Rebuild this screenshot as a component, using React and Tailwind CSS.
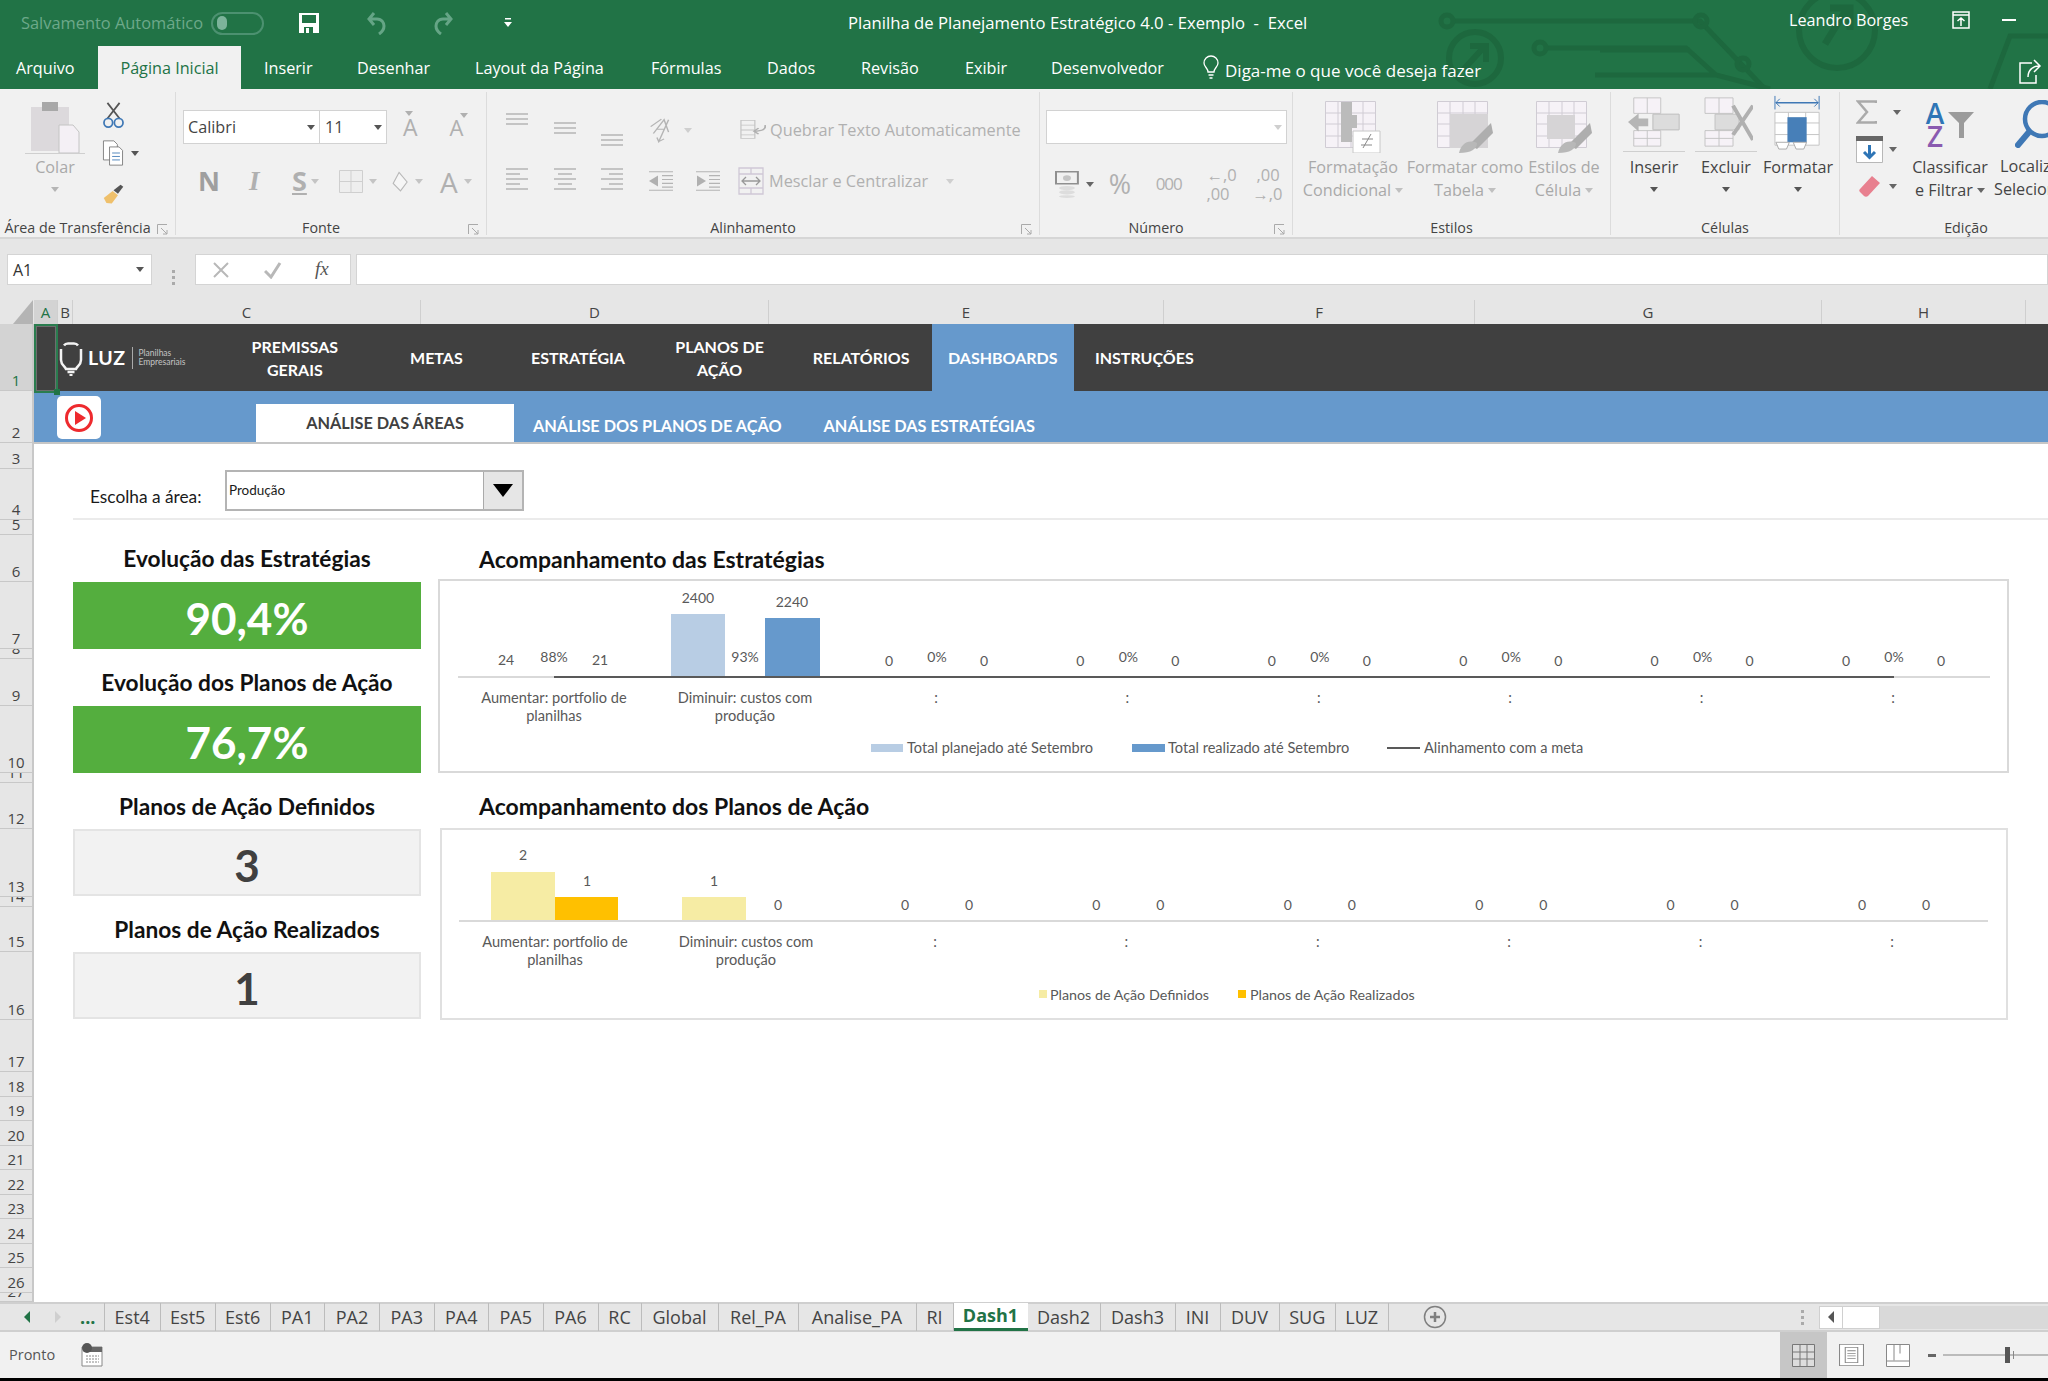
import React from 'react';

const G = '#b4b4b4';

function Caret({ c = '#8a8a8a', className = '' }) {
  return (
    <svg width="8" height="5" viewBox="0 0 8 5" className={className}>
      <path d="M0 0h8L4 5z" fill={c} />
    </svg>
  );
}

function Circuit() {
  return (
    <svg className="absolute top-0 left-0 pointer-events-none" width="2048" height="89" viewBox="0 0 2048 89" fill="none" stroke="#1d683e" strokeWidth="5">
      <path d="M1452 21H1700L1765 89" />
      <circle cx="1447" cy="21" r="6" />
      <circle cx="1701" cy="21" r="6" />
      <path d="M1544 48H1686L1716 75L1770 89M1690 50L1600 50M1595 75H1717" />
      <circle cx="1540" cy="48" r="6" />
      <circle cx="1743" cy="64" r="6" />
      <circle cx="1475" cy="58" r="26" strokeWidth="6" />
      <path d="M1463 70L1485 46M1470 46H1486V62" strokeWidth="6" />
      <circle cx="1837" cy="30" r="38" strokeWidth="6" />
      <path d="M1825 44L1846 10M1830 8H1850V30" strokeWidth="7" />
      <path d="M1990 89L2010 36H2048" />
    </svg>
  );
}

function TitleBar() {
  return (
    <div className="relative bg-[#217346] h-[89px] overflow-hidden font-['Open_Sans',sans-serif] shrink-0">
      <Circuit />
      <div className="relative h-[46px] flex items-center text-white">
        <span className="ml-[21px] w-[186px] text-[16.4px] text-[#6da98a] whitespace-nowrap">Salvamento Automático</span>
        <div className="ml-[4px] w-[53px] h-[23px] rounded-full border-2 border-[#4c9170] flex items-center pl-[4px]">
          <div className="w-[10px] h-[14px] rounded-full bg-[#7cb39a]" />
        </div>
        <svg className="ml-[35px]" width="20" height="20" viewBox="0 0 20 20">
          <path d="M0 0h20v20H0z" fill="#fff" />
          <path d="M3 2h14v8H3z" fill="#217346" />
          <path d="M5 14h9v6H5z" fill="#217346" />
          <path d="M7 15h3v5H7z" fill="#fff" />
        </svg>
        <svg className="ml-[47px]" width="22" height="24" viewBox="0 0 22 24" fill="none" stroke="#65a586" strokeWidth="3">
          <path d="M8 2L3 8l5 6M3 8h8c5 0 7 4 7 7 0 3-2 6-5 8" />
        </svg>
        <svg className="ml-[44px]" width="22" height="24" viewBox="0 0 22 24" fill="none" stroke="#65a586" strokeWidth="3">
          <path d="M14 2l5 6-5 6M19 8h-8c-5 0-7 4-7 7 0 3 2 6 5 8" />
        </svg>
        <svg className="ml-[50px]" width="8" height="10" viewBox="0 0 8 10" fill="#fff">
          <path d="M1 0h6v1.5H1zM0 4h8L4 9z" />
        </svg>
        <span className="ml-[336px] w-[480px] text-[16.7px] whitespace-pre">Planilha de Planejamento Estratégico 4.0 - Exemplo  -  Excel</span>
        <span className="ml-[461px] w-[140px] text-[16.2px] -mt-[6px] whitespace-nowrap">Leandro Borges</span>
        <svg className="ml-[22px] -mt-[6px]" width="20" height="18" viewBox="0 0 20 18" fill="none" stroke="#fff" strokeWidth="1.5">
          <path d="M2 1h16v16H2zM2 4h16M10 15V7M6.5 10L10 7l3.5 3" />
        </svg>
        <div className="ml-[31px] w-[14px] h-[2px] bg-white -mt-[6px]" />
      </div>
      <div className="relative h-[43px] flex text-white text-[16.2px] whitespace-nowrap">
        <span className="ml-[16px] w-[82px] pt-[10px]">Arquivo</span>
        <span className="w-[143px] bg-[#f1f1f1] text-[#217346] text-center pt-[10px]">Página Inicial</span>
        <span className="ml-[23px] w-[93px] pt-[10px]">Inserir</span>
        <span className="w-[118px] pt-[10px]">Desenhar</span>
        <span className="w-[176px] pt-[10px]">Layout da Página</span>
        <span className="w-[116px] pt-[10px]">Fórmulas</span>
        <span className="w-[94px] pt-[10px]">Dados</span>
        <span className="w-[104px] pt-[10px]">Revisão</span>
        <span className="w-[86px] pt-[10px]">Exibir</span>
        <span className="w-[152px] pt-[10px]">Desenvolvedor</span>
        <svg className="mt-[9px] mr-[6px]" width="16" height="24" viewBox="0 0 16 24" fill="none" stroke="#fff" strokeWidth="1.3">
          <path d="M5 17c0-4-4-5-4-9a7 7 0 0114 0c0 4-4 5-4 9zM5.5 20h5M6.5 23h3" />
        </svg>
        <span className="w-[300px] pt-[12px] text-[17px]">Diga-me o que você deseja fazer</span>
        <svg className="absolute left-[2018px] top-[11px]" width="26" height="28" viewBox="0 0 26 28" fill="none" stroke="#fff" strokeWidth="1.5">
          <path d="M14 6H2v20h16v-8M10 20c0-7 5-11 11-11M16 3l6 6-6 6" />
        </svg>
      </div>
    </div>
  );
}

function Group({ w, label, launcher, children }) {
  return (
    <div className={`${w} h-full shrink-0 flex flex-col relative`}>
      <div className="flex-1 min-h-0">{children}</div>
      <div className={`h-[18px] text-center text-[14.3px] text-[#444] leading-[18px] whitespace-nowrap ${launcher ? 'pr-[20px]' : ''}`}>{label}</div>
      {launcher && (
        <svg className="absolute right-[7px] bottom-[2px]" width="11" height="11" viewBox="0 0 11 11" fill="none" stroke="#aaa">
          <path d="M.5 10V.5H10M4 4l6 6M6 10h4V6" />
        </svg>
      )}
    </div>
  );
}

const Sep = () => <div className="w-px h-[143px] mt-[3px] bg-[#dcdcdc] shrink-0" />;

function Lines({ rows, w = 24, h = 38, stroke = G }) {
  return (
    <svg width={w} height={h} viewBox={`0 0 ${w} ${h}`} stroke={stroke} strokeWidth="1.5">
      {rows.map(([x1, x2, y], i) => <path key={i} d={`M${x1} ${y}H${x2}`} />)}
    </svg>
  );
}

const stack = (y, l = [[1, 23], [1, 23], [1, 23], [1, 23]]) => l.map((p, i) => [p[0], p[1], y + i * 5]);

function GridIcon({ w, h, children }) {
  return (
    <svg width={w} height={h} viewBox={`0 0 ${w} ${h}`}>
      {children}
    </svg>
  );
}

function Clipboard() {
  return (
    <Group w="w-[175px]" label="Área de Transferência" launcher>
      <div className="flex">
        <div className="ml-[22px] w-[66px] flex flex-col items-center pt-[10px]">
          <svg width="52" height="54" viewBox="0 0 52 54">
            <path d="M2 8h38v44H2z" fill="#dcd9dc" />
            <path d="M13 3h16v9H13z" fill="#a8a8a8" />
            <path d="M30 26h14l6 7v21H30z" fill="#f4f0f5" stroke="#c4c4c4" />
          </svg>
          <div className="h-px w-[60px] bg-[#cfcfcf]" />
          <span className="text-[16.2px] text-[#a9a9a9] mt-[1px]">Colar</span>
          <Caret c="#b5b5b5" className="mt-[8px]" />
        </div>
        <div className="ml-[14px] flex flex-col pt-[13px]">
          <svg width="23" height="26" viewBox="0 0 26 30" fill="none">
            <path d="M6 1l14 18M20 1L6 19" stroke="#555" strokeWidth="2" />
            <circle cx="7" cy="24" r="5" stroke="#3f78b5" strokeWidth="2" />
            <circle cx="19" cy="24" r="5" stroke="#3f78b5" strokeWidth="2" />
          </svg>
          <div className="flex items-center mt-[12px]">
            <svg width="22" height="26" viewBox="0 0 24 30" fill="#fff" stroke="#777">
              <path d="M1 1h12l4 4v18H1z" />
              <path d="M8 8h11l4 4v17H8z" />
              <path d="M11 15h9M11 19h9M11 23h9" stroke="#3f78b5" />
            </svg>
            <Caret c="#555" className="ml-[7px]" />
          </div>
          <svg width="23" height="21" viewBox="0 0 26 30" className="mt-[18px]" preserveAspectRatio="none">
            <path d="M2 20L12 10l6 6-7 12-6-1z" fill="#efc06b" />
            <path d="M13 9l8-8 3 3-6 10z" fill="#555" />
          </svg>
        </div>
      </div>
    </Group>
  );
}

function Fonte() {
  return (
    <Group w="w-[310px]" label="Fonte" launcher>
      <div className="pl-[7px] pt-[21px]">
        <div className="flex items-center">
          <div className="w-[137px] h-[34px] bg-white border border-[#d2d2d2] flex items-center justify-between pl-[4px] pr-[4px] text-[16.2px] text-[#444]">
            Calibri <Caret c="#555" />
          </div>
          <div className="w-[67px] h-[34px] bg-white border border-l-0 border-[#d2d2d2] flex items-center justify-between pl-[5px] pr-[4px] text-[16.2px] text-[#444]">
            11 <Caret c="#555" />
          </div>
          <span className="ml-[16px] text-[23px] text-[#b0b0b0] relative">A<Caret c="#b0b0b0" className="absolute top-[1px] left-[2px]" /></span>
          <span className="ml-[32px] text-[22px] text-[#b0b0b0] relative">A<Caret c="#b0b0b0" className="absolute top-[2px] left-[10px]" /></span>
        </div>
        <div className="flex items-center mt-[18px] h-[38px] text-[#b0b0b0] font-bold">
          <span className="ml-[15px] w-[51px] text-[27px] text-[#9f9f9f]">N</span>
          <span className="w-[43px] text-[27px] italic font-['Liberation_Serif',serif]">I</span>
          <span className="w-[19px] text-[27px] underline">S</span>
          <Caret c="#c4c4c4" />
          <svg className="ml-[20px]" width="24" height="23" viewBox="0 0 24 23" fill="#eee" stroke="#cfcfcf"><path d="M.5.5h23v22H.5zM12 .5v22M.5 11.5h23" /></svg>
          <Caret c="#c4c4c4" className="ml-[6px]" />
          <svg className="ml-[13px]" width="21" height="22" viewBox="0 0 24 30" fill="#f6f6f6" stroke="#b8b8b8" strokeWidth="1.5"><path d="M10 2l11 13-9 12-10-10z" /></svg>
          <Caret c="#c4c4c4" className="ml-[4px]" />
          <span className="ml-[17px] text-[28px] font-normal">A</span>
          <Caret c="#c4c4c4" className="ml-[6px]" />
        </div>
      </div>
    </Group>
  );
}

function Alinhamento() {
  return (
    <Group w="w-[552px]" label="Alinhamento" launcher>
      <div className="pl-[18px] pt-[21px] text-[16.3px] text-[#b0b0b0] whitespace-nowrap">
        <div className="flex items-center h-[40px]">
          <div className="w-[48px]"><Lines rows={stack(3).slice(0, 3)} /></div>
          <div className="w-[47px]"><Lines rows={stack(12).slice(0, 3)} /></div>
          <div className="w-[48px]"><Lines rows={stack(24).slice(0, 3)} /></div>
          <svg width="34" height="26" viewBox="0 0 38 38" preserveAspectRatio="none" fill="none" stroke={G} strokeWidth="1.6">
            <path d="M3 14L15 3M6 24l12-20 5 18M9 18h10M23 4L12 36l-2-6M12 36l6-4" />
          </svg>
          <Caret c="#cfcfcf" className="ml-[2px]" />
          <svg width="26" height="24" viewBox="0 0 28 40" preserveAspectRatio="none" fill="none" stroke="#c4c4c4" strokeWidth="1.3" className="ml-[48px]">
            <path d="M1 4h15v30H1zM1 12h15M1 20h15M1 28h15" />
            <path d="M27 12c1 6-2 10-12 10M20 17l-5 5 5 5" stroke="#b0b0b0" strokeWidth="2" />
          </svg>
          <span className="ml-[4px]">Quebrar Texto Automaticamente</span>
        </div>
        <div className="flex items-center h-[40px] mt-[11px]">
          <div className="w-[48px]"><Lines rows={stack(7, [[1, 23], [1, 15], [1, 23], [1, 15], [1, 23]])} /></div>
          <div className="w-[47px]"><Lines rows={stack(7, [[1, 23], [5, 19], [1, 23], [5, 19], [1, 23]])} /></div>
          <div className="w-[48px]"><Lines rows={stack(7, [[1, 23], [9, 23], [1, 23], [9, 23], [1, 23]])} /></div>
          <div className="w-[47px]">
            <svg width="26" height="20" viewBox="0 0 26 26" preserveAspectRatio="none" fill="none" stroke={G} strokeWidth="1.5">
              <path d="M1 1h24M14 6h11M14 11h11M14 16h11M14 21h11M1 25h24" />
              <path d="M1 13l9-7v14z" fill="#b0b0b0" stroke="none" />
            </svg>
          </div>
          <div className="w-[34px]">
            <svg width="26" height="20" viewBox="0 0 26 26" preserveAspectRatio="none" fill="none" stroke={G} strokeWidth="1.5">
              <path d="M1 1h24M14 6h11M14 11h11M14 16h11M14 21h11M1 25h24" />
              <path d="M11 13l-9-7v14z" fill="#b0b0b0" stroke="none" />
            </svg>
          </div>
          <svg width="26" height="28" viewBox="0 0 26 28" fill="none" stroke="#cfc8d6" strokeWidth="1.3" className="ml-[9px]">
            <path d="M1 1h24v26H1zM1 7h24M1 21h24M13 1v6M13 21v6" />
            <path d="M4 14h18M8 10l-4 4 4 4M18 10l4 4-4 4" stroke="#999" />
          </svg>
          <span className="ml-[5px]">Mesclar e Centralizar</span>
          <Caret c="#cfcfcf" className="ml-[18px]" />
        </div>
      </div>
    </Group>
  );
}

function Numero() {
  return (
    <Group w="w-[252px]" label="Número" launcher>
      <div className="pl-[6px] pt-[21px]">
        <div className="w-[241px] h-[34px] bg-white border border-[#d2d2d2] flex items-center justify-end pr-[4px]"><Caret c="#cfcfcf" /></div>
        <div className="flex items-center mt-[18px] h-[44px] text-[#b0b0b0]">
          <svg className="ml-[9px]" width="26" height="27" viewBox="0 0 26 38" preserveAspectRatio="none" fill="none">
            <path d="M1 1h22v17H1z" stroke="#8f8f8f" strokeWidth="2" />
            <circle cx="12" cy="10" r="4" fill="#c5c5c5" />
            <ellipse cx="12" cy="24" rx="8" ry="3" fill="#ddd" />
            <ellipse cx="12" cy="30" rx="8" ry="3" fill="#ddd" />
            <ellipse cx="12" cy="36" rx="8" ry="2" fill="#ddd" />
          </svg>
          <Caret c="#666" className="ml-[5px]" />
          <span className="ml-[15px] text-[27px] w-[42px]">%</span>
          <span className="ml-[5px] text-[17px] w-[51px] tracking-[-1px]">000</span>
          <div className="text-[16.5px] leading-[19px] w-[46px] whitespace-pre">{'←,0\n,00'}</div>
          <div className="text-[16.5px] leading-[19px] w-[40px] whitespace-pre">{' ,00\n→,0'}</div>
        </div>
      </div>
    </Group>
  );
}

function StyleBtn({ w, l1, l2, children }) {
  return (
    <div className={`${w} flex flex-col items-center pt-[12px] text-[16.2px] text-[#a9a9a9] whitespace-nowrap leading-[23px]`}>
      {children}
      <span className="mt-[3px]">{l1}</span>
      <span className="flex items-center gap-[4px]">{l2}<Caret c="#c0c0c0" /></span>
    </div>
  );
}

function TableLines() {
  return <path d="M.5.5h50v46H.5zM.5 12h50M.5 23h50M.5 35h50M13 .5v46M26 .5v46M38 .5v46" fill="none" stroke="#d0ccd4" />;
}

function Estilos() {
  return (
    <Group w="w-[317px]" label="Estilos">
      <div className="flex pl-[2px]">
        <StyleBtn w="w-[116px]" l1="Formatação" l2="Condicional">
          <GridIcon w={56} h={52}>
            <path d="M.5.5h50v46H.5z" fill="#f6f2f7" />
            <TableLines />
            <path d="M16 1h11v13h-11zM16 14h16v13H16zM16 27h11v14H16z" fill="#bbb" />
            <path d="M28 30h27v22H28z" fill="#fff" stroke="#c8c8c8" />
            <path d="M36 44h11M37 38h11M38 47l8-14" stroke="#888" fill="none" />
          </GridIcon>
        </StyleBtn>
        <StyleBtn w="w-[108px]" l1="Formatar como" l2="Tabela">
          <GridIcon w={56} h={52}>
            <path d="M.5.5h50v46H.5z" fill="#f6f2f7" />
            <TableLines />
            <path d="M13 13h38v34H13z" fill="#d6d4d6" />
            <path d="M54 22l2 10-16 16-8-4z" fill="#aeaeae" />
            <path d="M22 52c2-9 9-14 18-10 0 6-6 10-18 10z" fill="#b8b8b8" />
          </GridIcon>
        </StyleBtn>
        <StyleBtn w="w-[90px]" l1="Estilos de" l2="Célula">
          <GridIcon w={56} h={52}>
            <path d="M.5.5h50v46H.5z" fill="#f6f2f7" />
            <TableLines />
            <path d="M11 14h28v24H11z" fill="#d6d4d6" />
            <path d="M54 22l2 10-16 16-8-4z" fill="#aeaeae" />
            <path d="M22 52c2-9 9-14 18-10 0 6-6 10-18 10z" fill="#b8b8b8" />
          </GridIcon>
        </StyleBtn>
      </div>
    </Group>
  );
}

function CellBtn({ w, label, line, children }) {
  return (
    <div className={`${w} flex flex-col items-center pt-[8px] text-[16.2px] text-[#444]`}>
      <div className="h-[56px] flex items-start">{children}</div>
      {line ? <div className="h-px w-[62px] bg-[#cfcfcf] -mt-[2px]" /> : <div className="h-px -mt-[2px]" />}
      <span className="mt-[3px]">{label}</span>
      <Caret c="#555" className="mt-[8px]" />
    </div>
  );
}

function Celulas() {
  return (
    <Group w="w-[228px]" label="Células">
      <div className="flex">
        <CellBtn w="w-[72px] ml-[7px]" label="Inserir" line>
          <svg width="52" height="50" viewBox="0 0 54 58" preserveAspectRatio="none" fill="#f6f2f7" stroke="#c2c2c2">
            <path d="M6 1h28v18H6zM20 1v18M6 39h28v18H6zM20 39v18M6 48h28M26 20h27v18H26zM40 20v18" />
            <path d="M0 29l11-10v6h10v9H11v6z" fill="#b5b5b5" stroke="none" />
            <path d="M26 20h27v18H26z" fill="#dcdcdc" />
          </svg>
        </CellBtn>
        <CellBtn w="w-[72px]" label="Excluir" line>
          <svg width="54" height="50" viewBox="0 0 54 58" preserveAspectRatio="none" fill="#f6f2f7" stroke="#c2c2c2">
            <path d="M6 1h28v18H6zM20 1v18M6 39h28v18H6zM20 39v18M6 48h28" />
            <path d="M16 20h24v18H16z" fill="#dcdcdc" />
            <path d="M34 10l20 40M54 10L34 44" stroke="#b0b0b0" strokeWidth="4" />
          </svg>
        </CellBtn>
        <CellBtn w="w-[76px] ml-[-2px]" label="Formatar">
          <svg className="-mt-[3px]" width="48" height="56" viewBox="0 0 50 58" preserveAspectRatio="none" fill="none" stroke="#999">
            <path d="M2 9h44" stroke="#3f78b5" strokeWidth="1.5" />
            <path d="M1 2v14M47 2v14M6 5L2 9l4 4M42 5l4 4-4 4" stroke="#3f78b5" />
            <path d="M1 19h46v34H1zM15 19v34M33 19v34M1 30h46M1 42h46" stroke="#c4c4c4" fill="#fff" />
            <path d="M14 24h20v26H14z" fill="#477fb8" stroke="none" />
            <path d="M2 50h14l-3 7H5zM20 50h14l-3 7h-8z" fill="#fff" stroke="#aaa" />
          </svg>
        </CellBtn>
      </div>
    </Group>
  );
}

function Edicao() {
  return (
    <div className="h-full flex-1 relative overflow-hidden flex flex-col">
      <div className="flex-1 flex min-h-0">
        <div className="ml-[16px] w-[50px] pt-[11px] flex flex-col shrink-0">
          <div className="flex items-center gap-[16px] h-[24px]">
            <svg width="21" height="24" viewBox="0 0 21 24" fill="none" stroke="#aaa" strokeWidth="2.5"><path d="M20 3V1.5H2l9 10.5-9 10.5h18V21" /></svg>
            <Caret c="#666" />
          </div>
          <div className="flex items-center gap-[6px] mt-[12px]">
            <svg width="27" height="27" viewBox="0 0 27 27" fill="#fff" stroke="#b8b8b8">
              <path d="M.5.5h26v26H.5z" />
              <path d="M0 0h27v5H0z" fill="#666" stroke="none" />
              <path d="M13.5 9v12M8 16l5.5 5.5L19 16" stroke="#2e75b6" strokeWidth="3" fill="none" />
            </svg>
            <Caret c="#666" />
          </div>
          <div className="flex items-center gap-[9px] mt-[13px] ml-[3px]">
            <svg width="21" height="21" viewBox="0 0 21 21">
              <path d="M13 0l8 7L9 20c-1 1-3 1-4 0L1 16c-1-1-1-2 0-3z" fill="#e8808f" />
            </svg>
            <Caret c="#666" />
          </div>
        </div>
        <div className="w-[88px] pt-[13px] flex flex-col items-center text-[16.2px] text-[#444] whitespace-nowrap leading-[23px] shrink-0">
          <div className="flex h-[54px]">
            <div className="text-[28px] leading-[23px] font-semibold text-center">
              <div className="text-[#2e75b6]">A</div>
              <div className="text-[#8a5bb0]">Z</div>
            </div>
            <svg className="mt-[10px] ml-[4px]" width="26" height="26" viewBox="0 0 26 26" fill="#9b9b9b">
              <path d="M0 0h26L16 11v15h-5V11z" />
            </svg>
          </div>
          <span>Classificar</span>
          <span className="flex items-center gap-[4px]">e Filtrar <Caret c="#666" /></span>
        </div>
        <div className="pt-[11px] flex flex-col text-[16.2px] text-[#444] whitespace-nowrap leading-[23px]">
          <svg className="ml-[21px]" width="50" height="48" viewBox="0 0 50 48" fill="none" stroke="#3f78b5">
            <circle cx="27" cy="19" r="17" strokeWidth="4.5" />
            <path d="M14 32L3 45" strokeWidth="6" strokeLinecap="round" />
          </svg>
          <span className="mt-[7px] ml-[6px]">Localizar e</span>
          <span>Selecionar</span>
        </div>
      </div>
      <div className="h-[18px] w-[252px] text-center text-[14.3px] text-[#444] leading-[18px]">Edição</div>
    </div>
  );
}

function Ribbon() {
  return (
    <div className="h-[150px] bg-[#f1f1f1] border-b-2 border-[#d6d6d6] flex font-['Open_Sans',sans-serif] shrink-0">
      <Clipboard /><Sep />
      <Fonte /><Sep />
      <Alinhamento /><Sep />
      <Numero /><Sep />
      <Estilos /><Sep />
      <Celulas /><Sep />
      <Edicao />
    </div>
  );
}

function FormulaBar() {
  return (
    <div className="h-[61px] bg-[#e6e6e6] flex pt-[15px] font-['Open_Sans',sans-serif] shrink-0">
      <div className="ml-[7px] w-[145px] h-[31px] bg-white border border-[#d4d4d4] flex items-center justify-between px-[5px] text-[16px] text-[#333]">
        A1 <Caret c="#555" className="mr-[2px]" />
      </div>
      <div className="w-[43px] flex flex-col items-center justify-center gap-[3px]">
        <i className="w-[3px] h-[3px] bg-[#aaa]" /><i className="w-[3px] h-[3px] bg-[#aaa]" /><i className="w-[3px] h-[3px] bg-[#aaa]" />
      </div>
      <div className="w-[156px] h-[31px] bg-white border border-[#d4d4d4] flex items-center text-[#b4b4b4]">
        <svg className="ml-[17px]" width="16" height="18" viewBox="0 0 16 18" stroke="#b8b8b8" strokeWidth="2"><path d="M1 2l14 14M15 2L1 16" /></svg>
        <svg className="ml-[35px]" width="18" height="18" viewBox="0 0 18 18" fill="none" stroke="#b8b8b8" strokeWidth="3"><path d="M1 10l6 6L16 2" /></svg>
        <span className="ml-[33px] text-[19px] italic font-['Liberation_Serif',serif] text-[#555]">fx</span>
      </div>
      <div className="ml-[5px] flex-1 h-[31px] bg-white border border-[#d4d4d4]" />
    </div>
  );
}

const cols = [
  ['A', 'w-[24px] bg-[#d3d3d3] text-[#217346]'],
  ['B', 'w-[15px]'],
  ['C', 'w-[348px]'],
  ['D', 'w-[348px]'],
  ['E', 'w-[395px]'],
  ['F', 'w-[311px]'],
  ['G', 'w-[347px]'],
  ['H', 'w-[204px]'],
];

function ColumnHeaders() {
  return (
    <div className="h-[24px] bg-[#e6e6e6] flex font-['Open_Sans',sans-serif] text-[15px] text-[#444] shrink-0">
      <div className="w-[34px] relative overflow-hidden">
        <svg className="ml-[13px]" width="20" height="24" viewBox="0 0 20 24"><path d="M20 0v24H0z" fill="#b4b4b4" /></svg>
      </div>
      {cols.map(([l, c]) => (
        <div key={l} className={`${c} flex items-center justify-center border-r border-[#cfcfcf]`}>{l}</div>
      ))}
    </div>
  );
}

const rows = [
  ['1', 'h-[67px] bg-[#d3d3d3] text-[#217346]'],
  ['2', 'h-[52px]'],
  ['3', 'h-[26px]'],
  ['4', 'h-[51px]'],
  ['5', 'h-[15px]'],
  ['6', 'h-[47px]'],
  ['7', 'h-[67px]'],
  ['8', 'h-[10px]'],
  ['9', 'h-[47px]'],
  ['10', 'h-[67px]'],
  ['11', 'h-[10px]'],
  ['12', 'h-[46px]'],
  ['13', 'h-[68px]'],
  ['14', 'h-[10px]'],
  ['15', 'h-[45px]'],
  ['16', 'h-[68px]'],
  ['17', 'h-[52px]'],
  ...['18', '19', '20', '21', '22', '23', '24', '25', '26'].map((n) => [n, 'h-[24.5px]']),
  ['27', 'h-[9px]'],
];

function RowHeaders() {
  return (
    <div className="w-[34px] bg-[#e6e6e6] border-r-2 border-[#c8c8c8] shrink-0 font-['Open_Sans',sans-serif] text-[15px] text-[#444] overflow-hidden">
      {rows.map(([n, c]) => (
        <div key={n} className={`${c} relative overflow-hidden border-b border-[#c8c8c8] flex items-end justify-center`}>
          <span className="leading-[18px] mb-[1px] shrink-0">{n}</span>
        </div>
      ))}
    </div>
  );
}

function Logo() {
  return (
    <div className="w-[166px] flex items-center h-full shrink-0 text-white">
      <svg className="ml-[1px] mt-[3px]" width="24" height="34" viewBox="0 0 24 34" fill="none" stroke="#f2f2f2" strokeWidth="2.5">
        <path d="M2 7v11c0 5 4 6 5 9h10c1-3 5-4 5-9V7" />
        <path d="M5 3.5C6 2 7 1.5 9 1.5h6c2 0 3 .5 4 2" />
        <path d="M8.5 30h7" strokeWidth="2.5" />
        <path d="M10.5 33h3" strokeWidth="2" />
      </svg>
      <span className="ml-[5px] text-[19.5px] leading-none font-['Lato',sans-serif] tracking-[0.5px]">LUZ</span>
      <div className="ml-[6px] w-px h-[22px] bg-[#aaa]" />
      <div className="ml-[6px] text-[8.5px] leading-[9px] text-[#c4c4c4] font-['Lato',sans-serif] font-normal">Planilhas<br />Empresariais</div>
    </div>
  );
}

const navItems = [
  ['PREMISSAS', 'GERAIS'],
  ['METAS'],
  ['ESTRATÉGIA'],
  ['PLANOS DE', 'AÇÃO'],
  ['RELATÓRIOS'],
];

function TopNav() {
  return (
    <div className="h-[67px] bg-[#404040] flex relative text-white font-bold text-[16px] leading-[23px] shrink-0">
      <div className="w-[24px] h-[69px] border-2 border-[#2a7d4f] shrink-0 relative z-10">
        <div className="absolute inset-0 border border-[#6d6d6d]" />
        <div className="absolute right-[-4px] bottom-[-4px] w-[6px] h-[6px] bg-[#217346]" />
      </div>
      <Logo />
      {navItems.map((lines) => (
        <div key={lines[0]} className="w-[141.6px] flex flex-col items-center justify-center">
          {lines.map((l) => <span key={l}>{l}</span>)}
        </div>
      ))}
      <div className="w-[141.6px] bg-[#6699cc] flex items-center justify-center">DASHBOARDS</div>
      <div className="w-[141.6px] flex items-center justify-center">INSTRUÇÕES</div>
    </div>
  );
}

function SubNav() {
  return (
    <div className="h-[53px] bg-[#6699cc] flex text-[16.3px] font-bold border-b-2 border-[#c6c6c6] shrink-0">
      <div className="ml-[23px] mt-[5px] w-[44px] h-[43px] bg-white rounded-[5px] flex items-center justify-center">
        <svg width="30" height="30" viewBox="0 0 30 30">
          <circle cx="15" cy="15" r="12.5" fill="#fff" stroke="#ee2a2e" strokeWidth="3" />
          <path d="M11 8l11 7-11 7z" fill="#ee2a2e" />
        </svg>
      </div>
      <div className="ml-[155px] mt-[13px] w-[258px] bg-white text-[#404040] flex items-center justify-center">ANÁLISE DAS ÁREAS</div>
      <span className="ml-[19px] mt-[23px] text-white leading-[23px] whitespace-nowrap">ANÁLISE DOS PLANOS DE AÇÃO</span>
      <span className="ml-[42px] mt-[23px] text-white leading-[23px] whitespace-nowrap">ANÁLISE DAS ESTRATÉGIAS</span>
    </div>
  );
}

function AreaPicker() {
  return (
    <div className="h-[76px] pt-[26px] pl-[39px] shrink-0">
      <div className="flex pr-[23px] h-[50px] border-b-2 border-[#ebebeb] text-[17.3px] text-[#1a1a1a]">
        <span className="ml-[17px] mt-[16px] w-[135px] leading-[22px] whitespace-nowrap">Escolha a área:</span>
        <div className="w-[299px] h-[41px] border-2 border-[#b4b4b4] flex bg-white">
          <span className="ml-[2px] mt-[9px] flex-1 text-[13.5px] leading-[18px]">Produção</span>
          <div className="w-[39px] bg-[#e6e6e6] border-l border-[#aaa] flex items-center justify-center">
            <svg width="20" height="13" viewBox="0 0 20 13"><path d="M0 0h20L10 13z" fill="#000" /></svg>
          </div>
        </div>
      </div>
    </div>
  );
}

function Kpi({ title, value, green, h = 'h-[47px]' }) {
  return (
    <div className="w-[348px]">
      <div className={`${h} flex items-center justify-center text-[22.7px] font-bold text-[#111] pt-[2px] whitespace-nowrap`}>{title}</div>
      <div className={`h-[67px] flex items-center justify-center text-[44px] font-bold pt-[5px] ${green ? 'bg-[#54ae3e] text-white' : 'bg-[#f2f2f2] border-2 border-[#e4e4e4] text-[#404040]'}`}>{value}</div>
    </div>
  );
}

const chartText = '#595959';

function T({ x, y, children, size = 14.6, fill = chartText, anchor = 'middle' }) {
  return <text x={x} y={y - 1} fontSize={size} fill={fill} textAnchor={anchor} dominantBaseline="central">{children}</text>;
}

const step = 191.4;

function StrategyChart() {
  return (
    <div className="w-[1571px] h-[194px] border-2 border-[#d9d9d9] ml-[17px]">
      <svg width="1567" height="190" viewBox="440 581 1567 190" className="font-['Lato',sans-serif]">
        <path d="M671 614h54v63h-54z" fill="#b8cde4" />
        <path d="M765 618h55v59h-55z" fill="#6699cc" />
        <path d="M458 677H1990" stroke="#d9d9d9" strokeWidth="2" />
        <path d="M554 677H1894" stroke="#595959" strokeWidth="2" />
        <T size={14} x={506} y={660}>24</T><T size={14} x={554} y={657}>88%</T><T size={14} x={600} y={660}>21</T>
        <T size={14} x={698} y={598}>2400</T><T size={14} x={745} y={657}>93%</T><T size={14} x={792} y={602}>2240</T>
        {[0, 1, 2, 3, 4, 5].map((i) => (
          <g key={i}>
            <T size={14} x={889 + i * step} y={661}>0</T>
            <T size={14} x={937 + i * step} y={657}>0%</T>
            <T size={14} x={984 + i * step} y={661}>0</T>
            <T x={936 + i * step} y={698}>:</T>
          </g>
        ))}
        <T x={554} y={698}>Aumentar: portfolio de</T><T x={554} y={716}>planilhas</T>
        <T x={745} y={698}>Diminuir: custos com</T><T x={745} y={716}>produção</T>
        <path d="M871 744h32v8h-32z" fill="#b8cde4" />
        <T x={907} y={748} anchor="start">Total planejado até Setembro</T>
        <path d="M1132 744h33v8h-33z" fill="#6699cc" />
        <T x={1168} y={748} anchor="start">Total realizado até Setembro</T>
        <path d="M1387 748h33" stroke="#595959" strokeWidth="2" />
        <T x={1424} y={748} anchor="start">Alinhamento com a meta</T>
      </svg>
    </div>
  );
}

function PlansChart() {
  return (
    <div className="w-[1568px] h-[192px] border-2 border-[#e0e0e0] ml-[19px]">
      <svg width="1564" height="188" viewBox="442 830 1564 188" className="font-['Lato',sans-serif]">
        <path d="M491 872h64v49h-64z" fill="#f6eca4" />
        <path d="M555 897h63v24h-63z" fill="#ffc000" />
        <path d="M682 897h64v24h-64z" fill="#f6eca4" />
        <path d="M459 921H1988" stroke="#d9d9d9" strokeWidth="2" />
        <T size={14} x={523} y={855}>2</T><T size={14} x={587} y={881}>1</T><T size={14} x={714} y={881}>1</T><T size={14} x={778} y={905}>0</T>
        {[0, 1, 2, 3, 4, 5].map((i) => (
          <g key={i}>
            <T size={14} x={905 + i * step} y={905}>0</T>
            <T size={14} x={969 + i * step} y={905}>0</T>
            <T x={935 + i * step} y={942}>:</T>
          </g>
        ))}
        <T x={555} y={942}>Aumentar: portfolio de</T><T x={555} y={960}>planilhas</T>
        <T x={746} y={942}>Diminuir: custos com</T><T x={746} y={960}>produção</T>
        <path d="M1039 990h8v8h-8z" fill="#f6eca4" />
        <T size={14.3} x={1050} y={995} anchor="start">Planos de Ação Definidos</T>
        <path d="M1238 990h8v8h-8z" fill="#ffc000" />
        <T size={14.3} x={1250} y={995} anchor="start">Planos de Ação Realizados</T>
      </svg>
    </div>
  );
}

function Dashboard() {
  return (
    <div className="flex pl-[39px]">
      <div className="flex flex-col gap-[10px] w-[348px] shrink-0">
        <Kpi title="Evolução das Estratégias" value="90,4%" green />
        <Kpi title="Evolução dos Planos de Ação" value="76,7%" green />
        <Kpi title="Planos de Ação Definidos" value="3" h="h-[46px]" />
        <Kpi title="Planos de Ação Realizados" value="1" h="h-[46px]" />
      </div>
      <div className="flex flex-col">
        <div className="h-[44px] ml-[58px] flex items-center text-[23px] font-bold text-[#111] pt-[4px]">Acompanhamento das Estratégias</div>
        <StrategyChart />
        <div className="h-[55px] ml-[58px] flex items-center text-[23px] font-bold text-[#111] pt-[11px]">Acompanhamento dos Planos de Ação</div>
        <PlansChart />
      </div>
    </div>
  );
}

const tabs = [
  ['Est4', 'w-[55.5px]'], ['Est5', 'w-[55.5px]'], ['Est6', 'w-[54.5px]'], ['PA1', 'w-[54.5px]'], ['PA2', 'w-[55px]'],
  ['PA3', 'w-[54.5px]'], ['PA4', 'w-[54.5px]'], ['PA5', 'w-[54.5px]'], ['PA6', 'w-[55px]'], ['RC', 'w-[43px]'],
  ['Global', 'w-[77px]'], ['Rel_PA', 'w-[80px]'], ['Analise_PA', 'w-[118px]'], ['RI', 'w-[37px]'],
];
const tabsAfter = [
  ['Dash2', 'w-[73px]'], ['Dash3', 'w-[75px]'], ['INI', 'w-[45px]'], ['DUV', 'w-[59px]'], ['SUG', 'w-[56.5px]'], ['LUZ', 'w-[52.5px]'],
];

function SheetTab({ name, w }) {
  return <div className={`${w} h-[28px] flex items-center justify-center border-r border-[#bcbcbc] shrink-0`}>{name}</div>;
}

function SheetTabs() {
  return (
    <div className="h-[30px] bg-[#e6e6e6] border-t-2 border-b-2 border-[#cfcfcf] flex items-center font-['Open_Sans',sans-serif] text-[#444] text-[18px] shrink-0">
      <svg className="ml-[24px]" width="6" height="12" viewBox="0 0 6 12"><path d="M6 0v12L0 6z" fill="#217346" /></svg>
      <svg className="ml-[25px]" width="6" height="12" viewBox="0 0 6 12"><path d="M0 0v12l6-6z" fill="#cfcfcf" /></svg>
      <span className="ml-[19px] w-[25px] font-bold text-[#217346] leading-none border-r border-[#bcbcbc] h-[28px] flex items-center">...</span>
      {tabs.map(([n, w]) => <SheetTab key={n} name={n} w={w} />)}
      <div className="w-[74px] h-[28px] bg-white border-b-[3px] border-[#217346] font-bold text-[#217346] flex items-center justify-center shrink-0">Dash1</div>
      {tabsAfter.map(([n, w]) => <SheetTab key={n} name={n} w={w} />)}
      <svg className="ml-[34px]" width="24" height="24" viewBox="0 0 24 24" fill="none" stroke="#7f7f7f" strokeWidth="1.5">
        <circle cx="12" cy="12" r="10.5" />
        <path d="M12 7v10M7 12h10" strokeWidth="2.5" />
      </svg>
      <div className="ml-[354px] flex flex-col gap-[3px]">
        <i className="w-[3px] h-[3px] bg-[#aaa]" /><i className="w-[3px] h-[3px] bg-[#aaa]" /><i className="w-[3px] h-[3px] bg-[#aaa]" />
      </div>
      <div className="ml-[15px] w-[24px] h-[23px] bg-white border border-[#d0d0d0] flex items-center justify-center">
        <svg width="6" height="12" viewBox="0 0 6 12"><path d="M6 0v12L0 6z" fill="#555" /></svg>
      </div>
      <div className="w-[37px] h-[23px] bg-white border border-l-0 border-[#d0d0d0]" />
      <div className="flex-1 h-[23px] bg-[#d9d9d9]" />
    </div>
  );
}

function StatusBar() {
  return (
    <div className="h-[46px] bg-[#f1f1f1] flex items-center font-['Open_Sans',sans-serif] text-[14.5px] text-[#555] shrink-0">
      <span className="ml-[9px] w-[72px]">Pronto</span>
      <svg width="22" height="24" viewBox="0 0 22 24">
        <path d="M1 4h20v19H1z" fill="#fff" stroke="#888" />
        <path d="M8 4h13v5H8z" fill="#666" />
        <circle cx="6" cy="5" r="5" fill="#555" />
        <path d="M5 13h13M5 16h13M5 19h13" stroke="#888" strokeDasharray="2 1" />
      </svg>
      <div className="ml-[1677px] w-[47px] h-full bg-[#c6c6c6] flex items-center justify-center">
        <svg width="23" height="23" viewBox="0 0 23 23" fill="#ddd" stroke="#777"><path d="M.5.5h22v22H.5zM8 .5v22M15 .5v22M.5 8h22M.5 15h22" /></svg>
      </div>
      <svg className="ml-[12px]" width="25" height="22" viewBox="0 0 24 26" preserveAspectRatio="none" fill="#fff" stroke="#888"><path d="M.5.5h23v25H.5z" /><path d="M6 4h12v18H6z" /><path d="M8 8h8M8 11h8M8 14h8M8 17h8" /></svg>
      <svg className="ml-[22px]" width="24" height="23" viewBox="0 0 24 23" fill="#fff" stroke="#888"><path d="M.5.5h23v22H.5zM.5 17h23M8 .5v16M14 .5v9" /></svg>
      <div className="ml-[18px] w-[8px] h-[3px] bg-[#666]" />
      <div className="ml-[7px] flex-1 h-[2px] bg-[#bbb] relative">
        <div className="absolute left-[62px] top-[-7px] w-[5px] h-[16px] bg-[#555]" />
        <div className="absolute left-[70px] top-[-3px] w-px h-[8px] bg-[#888]" />
      </div>
    </div>
  );
}

export default function App() {
  return (
    <div className="w-[2048px] h-[1381px] flex flex-col overflow-hidden bg-white">
      <TitleBar />
      <Ribbon />
      <FormulaBar />
      <ColumnHeaders />
      <div className="h-[978px] flex overflow-hidden shrink-0">
        <RowHeaders />
        <div className="flex-1 flex flex-col font-['Lato',sans-serif] min-w-0">
          <TopNav />
          <SubNav />
          <AreaPicker />
          <div className="h-[15px]" />
          <Dashboard />
        </div>
      </div>
      <SheetTabs />
      <StatusBar />
      <div className="h-[3px] bg-black shrink-0" />
    </div>
  );
}
